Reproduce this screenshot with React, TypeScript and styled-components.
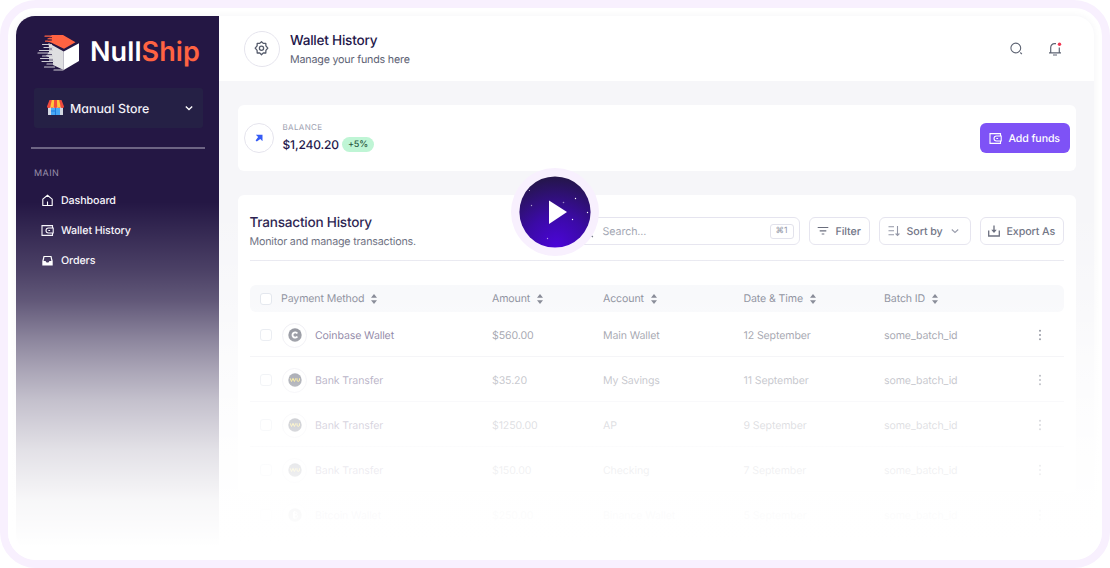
import React from 'react';
import styled, { createGlobalStyle } from 'styled-components';

const GlobalStyle = createGlobalStyle`
  * { box-sizing: border-box; }
  body {
    margin: 0;
    background: #fff;
    font-family: Inter, "Liberation Sans", sans-serif;
    color: #24174a;
    text-rendering: geometricPrecision;
  }
  button { text-rendering: inherit; }
  svg { display: block; flex: none; }
`;

const Frame = styled.div`
  position: relative;
  width: 1110px;
  height: 568px;
  padding: 8px;
  border: 8px solid #f8f0fe;
  border-radius: 36px;
  background: #fff;
  overflow: hidden;
`;

const Shell = styled.div`
  display: flex;
  width: 1078px;
  height: 536px;
  border-radius: 19px;
  overflow: hidden;
  box-shadow: 0 0 7px rgba(36, 23, 74, 0.05);
`;

const Sidebar = styled.aside`
  flex: none;
  width: 203px;
  background: #241744;
  padding: 16px 15px 0;
  display: flex;
  flex-direction: column;
`;

const Brand = styled.div`
  display: flex;
  align-items: center;
  height: 42px;
  padding-left: 6px;
  gap: 10px;
`;

const BrandName = styled.div`
  color: #fff;
  font-size: 27px;
  line-height: 36px;
  padding-bottom: 2px;
  font-weight: 600;
  letter-spacing: 0.1px;
  white-space: nowrap;
  font-feature-settings: "cv11";
  span { color: #ff6342; }
`;

const StorePicker = styled.div`
  display: flex;
  align-items: center;
  height: 40px;
  margin: 14px 1px 19px 3px;
  padding: 0 9px 0 13px;
  background: #252045;
  border-radius: 3px;
  color: #f3f1f8;
  font-size: 12.4px;
  font-weight: 500;
  font-feature-settings: "cv11";
`;

const StoreName = styled.span`
  flex: 1;
  padding-left: 6px;
`;

const Divider = styled.div`
  height: 2px;
  width: 174px;
  background: #6d6484;
`;

const NavTitle = styled.div`
  margin: 17.500px 0 6px 3px;
  font-size: 9px;
  line-height: 13px;
  letter-spacing: 0.45px;
  color: #9991ab;
`;

const NavItem = styled.div`
  display: flex;
  align-items: center;
  gap: 7px;
  height: 30px;
  padding-left: 10px;
  color: #f7f5fb;
  font-size: 10.7px;
  font-weight: 450;
  letter-spacing: -0.1px;
`;

const Main = styled.main`
  flex: 1;
  min-width: 0;
  background: #f6f6f9;
`;

const Topbar = styled.header`
  display: flex;
  align-items: center;
  height: 65px;
  padding: 0 32px 0 25px;
  background: #fff;
`;

const Ring = styled.div<{ $size: number }>`
  flex: none;
  display: grid;
  place-items: center;
  width: ${p => p.$size}px;
  height: ${p => p.$size}px;
  border: 1px solid #e5e4ed;
  border-radius: 50%;
  background: #fff;
`;

const Heading = styled.div`
  flex: 1;
  padding: 2px 0 0 10px;
`;

const Title = styled.h1`
  margin: 0;
  font-size: 13.6px;
  line-height: 20px;
  font-weight: 500;
  color: #24174a;
  letter-spacing: -0.24px;
`;

const Subtitle = styled.p`
  margin: 0;
  font-size: 10.7px;
  line-height: 18px;
  letter-spacing: -0.18px;
  color: #5d6274;
`;

const TopActions = styled.div`
  display: flex;
  align-items: center;
  gap: 25px;
`;

const Content = styled.div`
  padding: 24px 18px 0 18.5px;
  display: flex;
  flex-direction: column;
  gap: 24px;
`;

const BalanceCard = styled.section`
  display: flex;
  align-items: center;
  height: 66px;
  padding: 0 6px;
  background: #fff;
  border-radius: 6px;
`;

const BalanceInfo = styled.div`
  flex: 1;
  padding: 0 0 2px 9px;
`;

const Label = styled.div`
  font-size: 8px;
  line-height: 12px;
  letter-spacing: 0.35px;
  color: #9ca0b0;
`;

const Amount = styled.div`
  display: flex;
  align-items: center;
  gap: 3px;
  margin-top: 2.500px;
  margin-bottom: -1px;
  font-size: 12px;
  line-height: 18px;
  font-weight: 500;
  letter-spacing: -0.14px;
`;

const Pill = styled.span`
  height: 15px;
  padding: 0 6px;
  border-radius: 8px;
  background: #bff5d5;
  color: #28583f;
  font-size: 9px;
  line-height: 15px;
`;

const PrimaryButton = styled.button`
  display: flex;
  align-items: center;
  gap: 7px;
  width: 90.5px;
  height: 30px;
  padding: 0 0 0 9px;
  border: 0;
  border-radius: 6px;
  background: #7e52f6;
  color: #fff;
  font: 500 10.6px Inter, sans-serif;
  letter-spacing: -0.1px;
  white-space: nowrap;
`;

const TableCard = styled.section`
  height: 298px;
  padding: 16px 12px 0;
  background: #fff;
  border-radius: 6px;
`;

const TableTop = styled.div`
  display: flex;
  align-items: flex-start;
  height: 50px;
  border-bottom: 1px solid #e6e6ef;
  margin-bottom: 24px;
`;

const TableHeading = styled.div`
  width: 323.5px;
  padding-top: 2px;
`;

const Tools = styled.div`
  display: flex;
  gap: 9px;
  height: 28px;
  margin-top: 6px;
`;

const Control = styled.div<{ $width: number; $light?: boolean }>`
  display: flex;
  align-items: center;
  gap: 7px;
  width: ${p => p.$width}px;
  height: 28px;
  padding: 0 5px 0 7px;
  border: 1px solid #e4e3ee;
  border-radius: 6px;
  font-size: 10.7px;
  font-weight: ${p => (p.$light ? 400 : 500)};
  letter-spacing: -0.1px;
  color: #676b7c;
  background: #fff;
  white-space: nowrap;
`;

const SearchText = styled.span`
  flex: 1;
  padding-left: 2px;
  color: #9c9fae;
`;

const Shortcut = styled.kbd`
  width: 24px;
  height: 15px;
  border: 1px solid #e0e0ea;
  border-radius: 3px;
  text-align: center;
  font: 8.5px/13px Inter, "DejaVu Sans", sans-serif;
  color: #8b8fa0;
`;

const grid = `
  display: grid;
  grid-template-columns: 31.5px 211px 111px 140.5px 140.5px 1fr 48px;
  align-items: center;
  letter-spacing: -0.12px;
`;

const HeadRow = styled.div`
  ${grid}
  height: 27px;
  border-radius: 6px;
  background: #f6f7fa;
  color: #686c7d;
  font-size: 10.6px;
`;

const HeadCell = styled.div`
  display: flex;
  align-items: center;
  gap: 6px;
  white-space: nowrap;
`;

const Row = styled.div`
  ${grid}
  height: 45px;
  padding-top: 2px;
  border-bottom: 1px solid #e9e9ef;
  font-size: 10.6px;
  color: #5d6172;
`;

const Method = styled.div`
  display: flex;
  align-items: center;
  gap: 8px;
  padding-left: 1px;
  color: #38285f;
`;

const Check = styled.div`
  width: 12px;
  height: 12px;
  margin-left: 10px;
  border: 1px solid #dadfe8;
  border-radius: 3px;
  background: #fff;
`;

const Fade = styled.div`
  position: absolute;
  inset: 194px 0 0 0;
  background: linear-gradient(
    to bottom,
    rgba(255, 255, 255, 0) 0px,
    rgba(255, 255, 255, 0.18) 68px,
    rgba(255, 255, 255, 0.28) 98px,
    rgba(255, 255, 255, 0.48) 138px,
    rgba(255, 255, 255, 0.61) 168px,
    rgba(255, 255, 255, 0.73) 198px,
    rgba(255, 255, 255, 0.87) 248px,
    rgba(255, 255, 255, 0.965) 298px,
    #fff 345px
  );
  pointer-events: none;
`;

const Play = styled.button`
  position: absolute;
  left: 503px;
  top: 160px;
  width: 88px;
  height: 88px;
  padding: 0;
  border: 0;
  border-radius: 50%;
  background: #f8f0fe;
`;

const Logo = () => (
  <svg width="43" height="38" viewBox="0 0 43 38">
    <path d="M11.500 9 26.700 17.500V36L16 31v-3l-4-1v-4l-3-1 3-4V14z" fill="#dfdfe1" />
    <path d="M26.700 17.500 42 9.300V27L26.700 36z" fill="#fff" />
    <path d="M15 1h11l12.500 7.300L27 14.700 14 8.600l-4-1 5-1.500-4-1.500z" fill="#ff6342" />
    <path d="M8 2.200h14M11 4.800h10M8.500 7.200h12" stroke="#ff6342" strokeWidth="1.200" strokeLinecap="round" />
    <path d="M8 3.600h7M11 6h4" stroke="#241744" strokeWidth=".8" />
    <g stroke="#cfced4" strokeWidth="1.200" strokeLinecap="round">
      <path d="M5.500 10.500h9M7 13.500h9M2.500 16.500h13M1 19h13M5.500 22h10M3.500 24.500h12M5 27.500h12M10 30h7M7.500 33h10M17 36h9" />
    </g>
    <path d="M9 15h6M10 20.600h5M7 26h9M9 31.600h6" stroke="#241744" strokeWidth=".8" />
  </svg>
);

const StoreIcon = () => (
  <svg width="17" height="16" viewBox="0 0 17 16">
    <path d="M1 6h15v9H1z" fill="#d3d8e2" />
    <path d="M4 8h9v7H4z" fill="#48a9f4" />
    <path d="M8.500 8v7M4 11h4" stroke="#1e7ee0" strokeWidth="1" />
    <path d="M2.500 0h12L17 6.500c0 2-3.400 2-3.400 0 0 2-3.400 2-3.400 0 0 2-3.400 2-3.400 0 0 2-3.400 2-3.400 0C3.400 8.500 0 8.500 0 6.500z" fill="#f04a3e" />
    <path d="M4.800 0h2.300l-.3 6.500c0 1.500-3.400 1.500-3.400 0zM9.900 0h2.300l1.400 6.500c0 1.500-3.400 1.500-3.400 0z" fill="#ffc53d" />
  </svg>
);

const Chevron = ({ color, width = 1.3 }: { color: string; width?: number }) => (
  <svg width="10" height="10" viewBox="0 0 10 10" fill="none" stroke={color} strokeWidth={width}>
    <path d="m1.800 3.500 3.200 3 3.200-3" />
  </svg>
);

const HomeIcon = () => (
  <svg width="13" height="13" viewBox="0 0 13 13" fill="none" stroke="#fff" strokeWidth="1.100">
    <path d="M1.800 5.200 6.500 1.300l4.700 3.900v6.300H1.800zM6.500 11.500V7.500" />
  </svg>
);

const WalletIcon = () => (
  <svg width="13" height="13" viewBox="0 0 13 13" fill="none" stroke="currentColor" strokeWidth="1.100">
    <path d="M11.500 4V1.600H1v9.800h10.500V9" />
    <path d="M12.200 4H7.500a2.500 2.500 0 0 0 0 5h4.700z" />
    <path d="M7.300 6.500h1.800" />
  </svg>
);

const InboxIcon = () => (
  <svg width="13" height="13" viewBox="0 0 13 13">
    <path fillRule="evenodd" d="M2.500 2h8L11.700 7v4.500H1.300V7zM3.500 3 2.600 7h2.100c.2 2.100 3.400 2.100 3.600 0h2.100l-.9-4z" fill="#fff" />
  </svg>
);

const GearIcon = () => (
  <svg width="16" height="15" viewBox="0 0 16 15" fill="none" stroke="#555b6b" strokeWidth="1.300" strokeLinejoin="round">
    <path d="m7.500.7 1.800 1.700 2.500-.1.100 2.600 1.900 2.300-1.900 2.200-.1 2.600-2.500-.1-1.800 1.900-1.800-1.900-2.500.1-.1-2.600L1.200 7.200l1.900-2.300.1-2.600 2.500.1z" />
    <circle cx="7.500" cy="7.200" r="2.100" />
  </svg>
);

const SearchIcon = () => (
  <svg width="13" height="13" viewBox="0 0 13 13" fill="none" stroke="#5f6574" strokeWidth="1.100">
    <circle cx="5.800" cy="6" r="4.900" />
    <path d="m10.300 10.500 1.600 1.600" />
  </svg>
);

const BellIcon = () => (
  <svg width="14" height="14" viewBox="0 0 14 14" fill="none" stroke="#5f6574" strokeWidth="1.200">
    <path d="M8 1.600H6.500A3.800 3.800 0 0 0 2.700 5.400v5.400M11.300 5.500v5.300M1 10.800h12M5 13h4" />
    <circle cx="11.500" cy="2.200" r="1.700" fill="#f23550" stroke="none" />
  </svg>
);

const ArrowIcon = () => (
  <svg width="8" height="8" viewBox="0 0 8 8">
    <path d="M.8.700h6.700v6.600L5.300 5.100 1.800 7.600.600 6.400 3.100 2.900z" fill="#365cf5" />
  </svg>
);

const FilterIcon = () => (
  <svg width="12" height="12" viewBox="0 0 12 12" stroke="#5f6374" strokeWidth="1.200">
    <path d="M.7 2.500h10.600M2.700 5.800h6.600M4.700 9h2.600" />
  </svg>
);

const SortIcon = () => (
  <svg width="13" height="12" viewBox="0 0 13 12" fill="none" stroke="#8b8fa0" strokeWidth="1.100">
    <path d="M1.500 1.700H7M1.500 5.700H7M1.500 9.700H7M10.500 1v9M8.600 8.500l1.900 2 1.900-2" />
  </svg>
);

const ExportIcon = () => (
  <svg width="12" height="12" viewBox="0 0 12 12" fill="none" stroke="#5f6374" strokeWidth="1.300">
    <path d="M.7 5.500V11h10.600V5.500M6 .5v6" />
    <path d="M3.300 4.800h5.400L6 8z" fill="#5f6374" stroke="none" />
  </svg>
);

const Sorter = () => (
  <svg width="8" height="10" viewBox="0 0 8 10" fill="#5d6172">
    <path d="M4 0 7 3.700H1zM4 10 1 6.300h6z" />
  </svg>
);

const Dots = () => (
  <svg width="48" height="12" viewBox="0 0 48 12" fill="#454a5c">
    <circle cx="24" cy="1.700" r="1" /><circle cx="24" cy="6" r="1" /><circle cx="24" cy="10.300" r="1" />
  </svg>
);

const Coin = ({ kind }: { kind: string }) => (
  <svg width="14" height="14" viewBox="0 0 14 14" fill="none">
    <circle cx="7" cy="7" r="6.700" fill={kind === 'coinbase' ? '#4b4f5e' : '#262c40'} />
    {kind === 'coinbase' && <path d="M9.300 5.600a2.600 2.600 0 1 0 0 2.800" stroke="#fff" strokeWidth="1.900" />}
    {kind === 'bank' && <path d="m2.200 5.300 1.300 3.200 1.500-3.200 1.400 3.200 1.400-3.200M9 5.300v1.700c0 1.900 2.500 1.900 2.500 0V5.300" stroke="#f5cf00" strokeWidth="1" />}
    {kind === 'bitcoin' && <path d="M5.500 4h2c2 0 2 2.800 0 2.800h-2M5.500 6.800H8c2 0 2 3.200 0 3.200H5.500zM5.500 4v6M6.600 3v8" stroke="#fff" strokeWidth="1" />}
  </svg>
);

const PlayFace = () => (
  <svg width="88" height="88" viewBox="0 0 88 88">
    <defs>
      <radialGradient id="night" cx="0.52" cy="0.98" r="0.98">
        <stop offset="0" stopColor="#4b05d8" />
        <stop offset="0.45" stopColor="#3b0aa6" />
        <stop offset="1" stopColor="#241648" />
      </radialGradient>
    </defs>
    <circle cx="44" cy="44" r="35.600" fill="url(#night)" />
    <g fill="#fff">
      <circle cx="18.500" cy="22.500" r=".6" opacity=".7" />
      <circle cx="20.500" cy="37.500" r=".7" opacity=".6" />
      <circle cx="52.500" cy="34.500" r=".8" opacity=".5" />
      <circle cx="64.500" cy="30.500" r=".7" />
      <circle cx="76.500" cy="44.500" r=".7" />
      <circle cx="61.500" cy="51.500" r=".7" />
      <circle cx="36.500" cy="70.500" r=".7" opacity=".6" />
      <path d="M38 32.500 56 44 38 56z" />
    </g>
  </svg>
);

const columns = ['Payment Method', 'Amount', 'Account', 'Date & Time', 'Batch ID'];

const rows = [
  { kind: 'coinbase', method: 'Coinbase Wallet', amount: '$560.00', account: 'Main Wallet', date: '12 September' },
  { kind: 'bank', method: 'Bank Transfer', amount: '$35.20', account: 'My Savings', date: '11 September' },
  { kind: 'bank', method: 'Bank Transfer', amount: '$1250.00', account: 'AP', date: '9 September' },
  { kind: 'bank', method: 'Bank Transfer', amount: '$150.00', account: 'Checking', date: '7 September' },
  { kind: 'bitcoin', method: 'Bitcoin Wallet', amount: '$250.00', account: 'Binance Wallet', date: '5 September' },
];

export default function App() {
  return (
    <>
      <GlobalStyle />
      <Frame>
        <Shell>
          <Sidebar>
            <Brand>
              <Logo />
              <BrandName>Null<span>Ship</span></BrandName>
            </Brand>
            <StorePicker>
              <StoreIcon />
              <StoreName>Manual Store</StoreName>
              <Chevron color="#fff" />
            </StorePicker>
            <Divider />
            <NavTitle>MAIN</NavTitle>
            <NavItem><HomeIcon />Dashboard</NavItem>
            <NavItem><WalletIcon />Wallet History</NavItem>
            <NavItem><InboxIcon />Orders</NavItem>
          </Sidebar>
          <Main>
            <Topbar>
              <Ring $size={36}><GearIcon /></Ring>
              <Heading>
                <Title>Wallet History</Title>
                <Subtitle>Manage your funds here</Subtitle>
              </Heading>
              <TopActions><SearchIcon /><BellIcon /></TopActions>
            </Topbar>
            <Content>
              <BalanceCard>
                <Ring $size={30}><ArrowIcon /></Ring>
                <BalanceInfo>
                  <Label>BALANCE</Label>
                  <Amount>$1,240.20 <Pill>+5%</Pill></Amount>
                </BalanceInfo>
                <PrimaryButton><WalletIcon />Add funds</PrimaryButton>
              </BalanceCard>
              <TableCard>
                <TableTop>
                  <TableHeading>
                    <Title>Transaction History</Title>
                    <Subtitle>Monitor and manage transactions.</Subtitle>
                  </TableHeading>
                  <Tools>
                    <Control $width={227} $light>
                      <SearchIcon />
                      <SearchText>Search...</SearchText>
                      <Shortcut>⌘1</Shortcut>
                    </Control>
                    <Control $width={61}><FilterIcon />Filter</Control>
                    <Control $width={92}><SortIcon />Sort by<Chevron color="#9296a6" width={1.1} /></Control>
                    <Control $width={84.5}><ExportIcon />Export As</Control>
                  </Tools>
                </TableTop>
                <HeadRow>
                  <Check />
                  {columns.map(name => <HeadCell key={name}>{name}<Sorter /></HeadCell>)}
                </HeadRow>
                {rows.map(row => (
                  <Row key={row.date}>
                    <Check />
                    <Method><Ring $size={25}><Coin kind={row.kind} /></Ring>{row.method}</Method>
                    <span>{row.amount}</span>
                    <span>{row.account}</span>
                    <span>{row.date}</span>
                    <span>some_batch_id</span>
                    <Dots />
                  </Row>
                ))}
              </TableCard>
            </Content>
          </Main>
        </Shell>
        <Fade />
        <Play aria-label="Play"><PlayFace /></Play>
      </Frame>
    </>
  );
}
